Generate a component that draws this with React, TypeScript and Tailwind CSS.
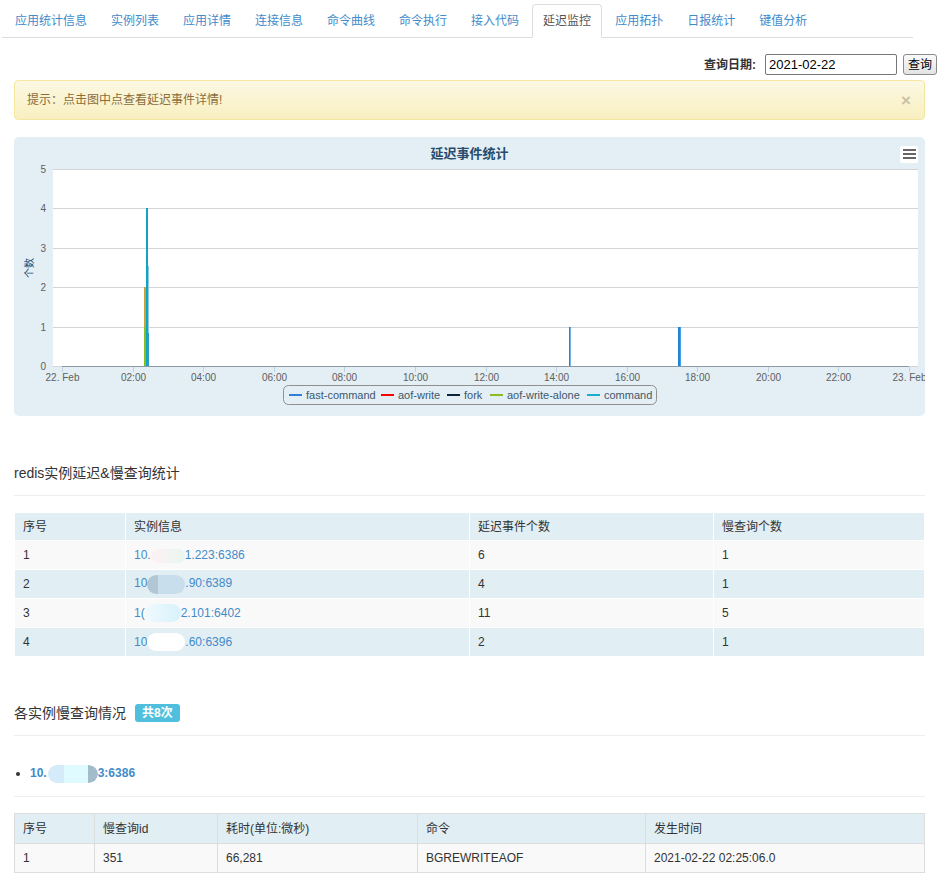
import React from "react";

const TABS = [
  "应用统计信息",
  "实例列表",
  "应用详情",
  "连接信息",
  "命令曲线",
  "命令执行",
  "接入代码",
  "延迟监控",
  "应用拓扑",
  "日报统计",
  "键值分析",
];
const ACTIVE_TAB = "延迟监控";

const X_LABELS = [
  "22. Feb",
  "02:00",
  "04:00",
  "06:00",
  "08:00",
  "10:00",
  "12:00",
  "14:00",
  "16:00",
  "18:00",
  "20:00",
  "22:00",
  "23. Feb",
];

const LEGEND = [
  { color: "#2f7ed8", label: "fast-command", lx: 275, tx: 292 },
  { color: "#ff0000", label: "aof-write", lx: 367, tx: 384 },
  { color: "#0d233a", label: "fork", lx: 433, tx: 450 },
  { color: "#8bbc21", label: "aof-write-alone", lx: 476, tx: 493 },
  { color: "#1aadce", label: "command", lx: 573, tx: 590 },
];

const FONT = { fontFamily: '"Liberation Sans", "Noto Sans CJK SC", sans-serif' };

function DelayChart() {
  const left = 39;
  const right = 904;
  const top = 32;
  const bottom = 229;
  const step = (bottom - top) / 5;
  const x0 = 48;
  const xStep = (895 - 48) / 12;

  return (
    <svg width="911" height="279" className="block" style={FONT}>
      <rect x={left} y={top} width={right - left} height={bottom - top} fill="#ffffff" />
      {[0, 1, 2, 3, 4, 5].map((i) => {
        const y = Math.round(top + i * step) + 0.5;
        return (
          <g key={i}>
            <line x1={left} x2={right} y1={y} y2={y} stroke="#d4d4d4" strokeWidth="1" />
            <text x="32" y={y + 3.5} textAnchor="end" fontSize="10" fill="#606060">
              {5 - i}
            </text>
          </g>
        );
      })}

      {/* x axis */}
      <line x1={x0} x2="895" y1={bottom + 0.5} y2={bottom + 0.5} stroke="#8a9aa6" strokeWidth="1" />
      {X_LABELS.map((l, i) => {
        const x = Math.round(x0 + i * xStep) + 0.5;
        return (
          <g key={l}>
            <line x1={x} x2={x} y1={bottom + 1} y2={bottom + 6} stroke="#c0d0e0" strokeWidth="1" />
            <text x={x} y="244" textAnchor="middle" fontSize="10" fill="#606060">
              {l}
            </text>
          </g>
        );
      })}

      {/* y axis title */}
      <text
        x="16"
        y="131"
        transform="rotate(-90 16 131)"
        textAnchor="middle"
        dominantBaseline="middle"
        fontSize="10"
        fill="#274b6d"
      >
        个数
      </text>

      {/* spikes */}
      <rect x="130" y="150" width="2" height="40" fill="#c9a23a" />
      <rect x="130" y="190" width="2" height="39" fill="#8bbc21" />
      <rect x="132" y="71" width="2" height="158" fill="#0ea5c5" />
      <rect x="134" y="129" width="1" height="100" fill="#8ecbe2" />
      <rect x="133" y="196" width="2" height="33" fill="#2a9cc0" />
      <rect x="555" y="190" width="1.6" height="39" fill="#1c86dc" />
      <rect x="664" y="190" width="2.8" height="39" fill="#1c86dc" />

      {/* title */}
      <text x="455.5" y="21" textAnchor="middle" fontSize="13" fontWeight="bold" fill="#274b6d">
        延迟事件统计
      </text>

      {/* context menu button */}
      <rect x="886" y="9" width="18" height="17" rx="2" fill="#ffffff" />
      <rect x="889" y="12" width="13" height="2" fill="#666666" />
      <rect x="889" y="16" width="13" height="2" fill="#666666" />
      <rect x="889" y="20" width="13" height="2" fill="#666666" />

      {/* legend */}
      <rect x="269.5" y="248.5" width="373" height="19" rx="5" fill="none" stroke="#909090" strokeWidth="1" />
      {LEGEND.map((item) => (
        <g key={item.label}>
          <line x1={item.lx} x2={item.lx + 13} y1="258" y2="258" stroke={item.color} strokeWidth="2" />
          <text x={item.tx} y="262" fontSize="11" fill="#3e576f">
            {item.label}
          </text>
        </g>
      ))}
    </svg>
  );
}

function Blob({ className }: { className: string }) {
  return <span className={`inline-block align-middle rounded-full ${className}`} />;
}

const INSTANCES = [
  {
    id: 1,
    ip: (
      <>
        10.
        <Blob className="w-[34px] h-[14px] bg-gradient-to-r from-[#fdf1f3] to-[#e9f6f0]" />
        1.223:6386
      </>
    ),
    delay: 6,
    slow: 1,
  },
  {
    id: 2,
    ip: (
      <>
        10
        <Blob className="w-[38px] h-[19px] bg-gradient-to-r from-[#b2c7d3] from-30% to-[#c8deec] to-30%" />
        .90:6389
      </>
    ),
    delay: 4,
    slow: 1,
  },
  {
    id: 3,
    ip: (
      <>
        1(
        <Blob className="w-[36px] h-[18px] bg-gradient-to-r from-[#effafd] to-[#d8f1fc]" />
        2.101:6402
      </>
    ),
    delay: 11,
    slow: 5,
  },
  {
    id: 4,
    ip: (
      <>
        10
        <Blob className="w-[38px] h-[18px] bg-white" />
        .60:6396
      </>
    ),
    delay: 2,
    slow: 1,
  },
];

export default function App() {
  return (
    <div className="min-h-[887px] bg-white pt-[4px] text-[12px] text-[#333]" style={FONT}>
      {/* Tabs */}
      <ul className="ml-[2px] w-[911px] pl-[2px] flex border-b border-[#ddd]">
        {TABS.map((t) => {
          const active = t === ACTIVE_TAB;
          return (
            <li
              key={t}
              className={`-mb-px mr-[2px] h-[34px] px-[10px] flex items-center border rounded-t-[4px] leading-[20px] ${
                active ? "border-[#ddd] border-b-white bg-white text-[#555]" : "border-transparent text-[#428bca]"
              }`}
            >
              {t}
            </li>
          );
        })}
      </ul>

      {/* Date query */}
      <div className="mt-[16px] h-[21px] flex items-center justify-end pr-[9px]">
        <span className="font-bold text-[#333] mr-[9px]">查询日期:</span>
        <input
          readOnly
          value="2021-02-22"
          className="w-[132px] h-[21px] border border-[#767676] rounded-[2px] px-[3px] text-[13px] text-black outline-none"
        />
        <button
          type="button"
          className="ml-[6px] w-[34px] h-[21px] border border-[#8a8a8a] rounded-[3px] bg-gradient-to-b from-[#fafafa] to-[#e3e3e3] text-[12px] text-black"
        >
          查询
        </button>
      </div>

      <div className="ml-[14px] w-[911px]">
        {/* Alert */}
        <div className="mt-[5px] h-[40px] flex items-center justify-between pl-[12px] pr-[13px] border border-[#f5e79e] rounded-[4px] bg-gradient-to-b from-[#fcf8e3] to-[#f8efc0] text-[#8a6d3b]">
          <span>提示：点击图中点查看延迟事件详情!</span>
          <span className="text-[17px] font-bold text-[#c9c2a8] leading-none">×</span>
        </div>

        {/* Chart */}
        <div className="mt-[17px] h-[279px] rounded-[5px] bg-[#e3eff4] overflow-hidden">
          <DelayChart />
        </div>

        {/* Section 1 */}
        <h4 className="mt-[47px] h-[20px] leading-[20px] text-[14px] text-[#333]">redis实例延迟&慢查询统计</h4>
        <hr className="mt-[12px] border-t border-[#eee]" />
        <table className="mt-[16px] w-full border-collapse">
          <thead>
            <tr className="bg-[#e1eef3]">
              <th className="w-[111px] h-[28px] px-[8px] text-left font-normal border border-white">序号</th>
              <th className="w-[344px] px-[8px] text-left font-normal border border-white">实例信息</th>
              <th className="w-[244px] px-[8px] text-left font-normal border border-white">延迟事件个数</th>
              <th className="px-[8px] text-left font-normal border border-white">慢查询个数</th>
            </tr>
          </thead>
          <tbody>
            {INSTANCES.map((r) => (
              <tr key={r.id} className={r.id % 2 === 1 ? "bg-[#f9f9f9]" : "bg-[#e1eef3]"}>
                <td className="h-[29px] px-[8px] border border-white">{r.id}</td>
                <td className="px-[8px] border border-white text-[#428bca] whitespace-nowrap">{r.ip}</td>
                <td className="px-[8px] border border-white">{r.delay}</td>
                <td className="px-[8px] border border-white">{r.slow}</td>
              </tr>
            ))}
          </tbody>
        </table>

        {/* Section 2 */}
        <div className="mt-[46px] h-[20px] flex items-center">
          <h4 className="text-[14px] leading-[20px] text-[#333]">各实例慢查询情况</h4>
          <span className="ml-[9px] h-[18px] px-[7px] flex items-center rounded-[3px] bg-[#4fbfdd] text-white font-bold text-[12px]">
            共8次
          </span>
        </div>
        <hr className="mt-[12px] border-t border-[#eee]" />
        <ul className="mt-[28px] h-[18px] list-disc pl-[16px]">
          <li className="leading-[18px] font-bold text-[#428bca] whitespace-nowrap marker:text-[#333]">
            10.
            <span className="inline-flex align-middle h-[18px] w-[50px] ml-[1px] rounded-r-full overflow-hidden">
              <span className="w-[16px] bg-[#d5ebfa] rounded-l-full" />
              <span className="w-[24px] bg-[#e0fbff]" />
              <span className="w-[10px] bg-[#a3bccc] rounded-r-full" />
            </span>
            3:6386
          </li>
        </ul>
        <hr className="mt-[14px] border-t border-[#eee]" />
        <table className="mt-[16px] w-full border-collapse border border-[#ddd]">
          <thead>
            <tr className="bg-[#e1eef3]">
              <th className="w-[80px] h-[30px] px-[8px] text-left font-normal border border-[#ddd]">序号</th>
              <th className="w-[123px] px-[8px] text-left font-normal border border-[#ddd]">慢查询id</th>
              <th className="w-[200px] px-[8px] text-left font-normal border border-[#ddd]">耗时(单位:微秒)</th>
              <th className="w-[228px] px-[8px] text-left font-normal border border-[#ddd]">命令</th>
              <th className="px-[8px] text-left font-normal border border-[#ddd]">发生时间</th>
            </tr>
          </thead>
          <tbody>
            <tr className="bg-[#f9f9f9]">
              <td className="h-[29px] px-[8px] border border-[#ddd]">1</td>
              <td className="px-[8px] border border-[#ddd]">351</td>
              <td className="px-[8px] border border-[#ddd]">66,281</td>
              <td className="px-[8px] border border-[#ddd]">BGREWRITEAOF</td>
              <td className="px-[8px] border border-[#ddd]">2021-02-22 02:25:06.0</td>
            </tr>
          </tbody>
        </table>
      </div>
    </div>
  );
}
